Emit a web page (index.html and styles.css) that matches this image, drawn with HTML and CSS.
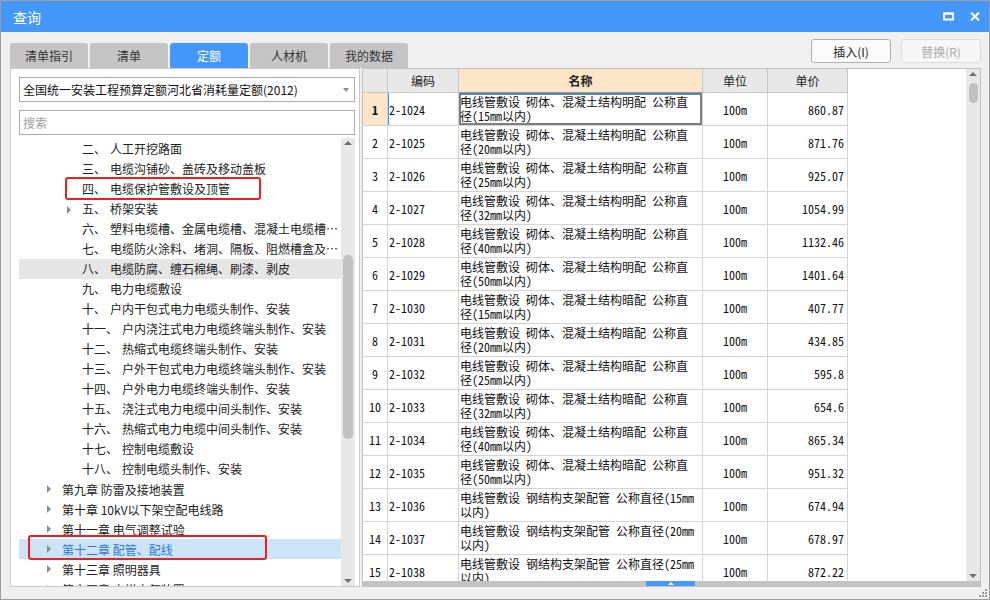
FILE: index.html
```html
<!DOCTYPE html>
<html lang="zh-CN">
<head>
<meta charset="utf-8">
<title>查询</title>
<link rel="stylesheet" href="styles.css">
</head>
<body>
<div class="window">
  <div class="titlebar">
    <span class="title">查询</span>
    <div class="win-btns">
      <svg class="ico-max" width="11" height="9" viewBox="0 0 11 9"><rect x="1" y="1.5" width="9" height="6" fill="none" stroke="#fff" stroke-width="2"/><rect x="1" y="0.5" width="9" height="2" fill="#fff"/></svg>
      <svg class="ico-close" width="10" height="9" viewBox="0 0 10 9"><path d="M1 0.5 L9 8.5 M9 0.5 L1 8.5" stroke="#fff" stroke-width="2" fill="none"/></svg>
    </div>
  </div>

  <div class="toolbar">
    <div class="tabs">
      <div class="tab">清单指引</div>
      <div class="tab">清单</div>
      <div class="tab active">定额</div>
      <div class="tab">人材机</div>
      <div class="tab">我的数据</div>
    </div>
    <div class="actions">
      <div class="btn">插入(I)</div>
      <div class="btn disabled">替换(R)</div>
    </div>
  </div>

  <div class="panels">
    <div class="left">
      <div class="select"><span class="select-text">全国统一安装工程预算定额河北省消耗量定额(2012)</span><i class="caret-down"></i></div>
      <div class="search">搜索</div>
      <div class="tree-wrap">
        <div class="tree">
          <div class="row l2"><i class="arr none"></i><span class="lbl">二、</span>人工开挖路面</div>
          <div class="row l2"><i class="arr none"></i><span class="lbl">三、</span>电缆沟铺砂、盖砖及移动盖板</div>
          <div class="row l2"><i class="arr none"></i><span class="lbl">四、</span>电缆保护管敷设及顶管</div>
          <div class="row l2"><i class="arr"></i><span class="lbl">五、</span>桥架安装</div>
          <div class="row l2"><i class="arr none"></i><span class="lbl">六、</span>塑料电缆槽、金属电缆槽、混凝土电缆槽、电缆桥架</div>
          <div class="row l2"><i class="arr none"></i><span class="lbl">七、</span>电缆防火涂料、堵洞、隔板、阻燃槽盒及防火包</div>
          <div class="row l2 hover"><i class="arr none"></i><span class="lbl">八、</span>电缆防腐、缠石棉绳、刷漆、剥皮</div>
          <div class="row l2"><i class="arr none"></i><span class="lbl">九、</span>电力电缆敷设</div>
          <div class="row l2"><i class="arr none"></i><span class="lbl">十、</span>户内干包式电力电缆头制作、安装</div>
          <div class="row l2"><i class="arr none"></i><span class="lbl">十一、</span>户内浇注式电力电缆终端头制作、安装</div>
          <div class="row l2"><i class="arr none"></i><span class="lbl">十二、</span>热缩式电缆终端头制作、安装</div>
          <div class="row l2"><i class="arr none"></i><span class="lbl">十三、</span>户外干包式电力电缆终端头制作、安装</div>
          <div class="row l2"><i class="arr none"></i><span class="lbl">十四、</span>户外电力电缆终端头制作、安装</div>
          <div class="row l2"><i class="arr none"></i><span class="lbl">十五、</span>浇注式电力电缆中间头制作、安装</div>
          <div class="row l2"><i class="arr none"></i><span class="lbl">十六、</span>热缩式电力电缆中间头制作、安装</div>
          <div class="row l2"><i class="arr none"></i><span class="lbl">十七、</span>控制电缆敷设</div>
          <div class="row l2"><i class="arr none"></i><span class="lbl">十八、</span>控制电缆头制作、安装</div>
          <div class="row l1"><i class="arr"></i>第九章 防雷及接地装置</div>
          <div class="row l1"><i class="arr"></i>第十章 10kV以下架空配电线路</div>
          <div class="row l1"><i class="arr"></i>第十一章 电气调整试验</div>
          <div class="row l1 selected"><i class="arr"></i>第十二章 配管、配线</div>
          <div class="row l1"><i class="arr"></i>第十三章 照明器具</div>
          <div class="row l1"><i class="arr"></i>第十四章 电梯电气装置</div>
          <div class="mark mark1"></div>
          <div class="mark mark2"></div>
        </div>
        <div class="vscroll tree-scroll">
          <i class="sc-up"></i>
          <div class="thumb tree-thumb"></div>
          <i class="sc-down"></i>
        </div>
      </div>
    </div>

    <div class="right">
      <div class="grid-area">
        <div class="grid">
          <div class="grow head">
            <div class="c c-no"></div>
            <div class="c c-code">编码</div>
            <div class="c c-name hname">名称</div>
            <div class="c c-unit">单位</div>
            <div class="c c-price hprice">单价</div>
          </div>
          <div class="grow cur">
            <div class="c c-no">1</div>
            <div class="c c-code">2-1024</div>
            <div class="c c-name">电线管敷设 砌体、混凝土结构明配 公称直<br>径(15mm以内)</div>
            <div class="c c-unit">100m</div>
            <div class="c c-price">860.87</div>
          </div>
          <div class="grow">
            <div class="c c-no">2</div>
            <div class="c c-code">2-1025</div>
            <div class="c c-name">电线管敷设 砌体、混凝土结构明配 公称直<br>径(20mm以内)</div>
            <div class="c c-unit">100m</div>
            <div class="c c-price">871.76</div>
          </div>
          <div class="grow">
            <div class="c c-no">3</div>
            <div class="c c-code">2-1026</div>
            <div class="c c-name">电线管敷设 砌体、混凝土结构明配 公称直<br>径(25mm以内)</div>
            <div class="c c-unit">100m</div>
            <div class="c c-price">925.07</div>
          </div>
          <div class="grow">
            <div class="c c-no">4</div>
            <div class="c c-code">2-1027</div>
            <div class="c c-name">电线管敷设 砌体、混凝土结构明配 公称直<br>径(32mm以内)</div>
            <div class="c c-unit">100m</div>
            <div class="c c-price">1054.99</div>
          </div>
          <div class="grow">
            <div class="c c-no">5</div>
            <div class="c c-code">2-1028</div>
            <div class="c c-name">电线管敷设 砌体、混凝土结构明配 公称直<br>径(40mm以内)</div>
            <div class="c c-unit">100m</div>
            <div class="c c-price">1132.46</div>
          </div>
          <div class="grow">
            <div class="c c-no">6</div>
            <div class="c c-code">2-1029</div>
            <div class="c c-name">电线管敷设 砌体、混凝土结构明配 公称直<br>径(50mm以内)</div>
            <div class="c c-unit">100m</div>
            <div class="c c-price">1401.64</div>
          </div>
          <div class="grow">
            <div class="c c-no">7</div>
            <div class="c c-code">2-1030</div>
            <div class="c c-name">电线管敷设 砌体、混凝土结构暗配 公称直<br>径(15mm以内)</div>
            <div class="c c-unit">100m</div>
            <div class="c c-price">407.77</div>
          </div>
          <div class="grow">
            <div class="c c-no">8</div>
            <div class="c c-code">2-1031</div>
            <div class="c c-name">电线管敷设 砌体、混凝土结构暗配 公称直<br>径(20mm以内)</div>
            <div class="c c-unit">100m</div>
            <div class="c c-price">434.85</div>
          </div>
          <div class="grow">
            <div class="c c-no">9</div>
            <div class="c c-code">2-1032</div>
            <div class="c c-name">电线管敷设 砌体、混凝土结构暗配 公称直<br>径(25mm以内)</div>
            <div class="c c-unit">100m</div>
            <div class="c c-price">595.8</div>
          </div>
          <div class="grow">
            <div class="c c-no">10</div>
            <div class="c c-code">2-1033</div>
            <div class="c c-name">电线管敷设 砌体、混凝土结构暗配 公称直<br>径(32mm以内)</div>
            <div class="c c-unit">100m</div>
            <div class="c c-price">654.6</div>
          </div>
          <div class="grow">
            <div class="c c-no">11</div>
            <div class="c c-code">2-1034</div>
            <div class="c c-name">电线管敷设 砌体、混凝土结构暗配 公称直<br>径(40mm以内)</div>
            <div class="c c-unit">100m</div>
            <div class="c c-price">865.34</div>
          </div>
          <div class="grow">
            <div class="c c-no">12</div>
            <div class="c c-code">2-1035</div>
            <div class="c c-name">电线管敷设 砌体、混凝土结构暗配 公称直<br>径(50mm以内)</div>
            <div class="c c-unit">100m</div>
            <div class="c c-price">951.32</div>
          </div>
          <div class="grow">
            <div class="c c-no">13</div>
            <div class="c c-code">2-1036</div>
            <div class="c c-name">电线管敷设 钢结构支架配管 公称直径(15mm<br>以内)</div>
            <div class="c c-unit">100m</div>
            <div class="c c-price">674.94</div>
          </div>
          <div class="grow">
            <div class="c c-no">14</div>
            <div class="c c-code">2-1037</div>
            <div class="c c-name">电线管敷设 钢结构支架配管 公称直径(20mm<br>以内)</div>
            <div class="c c-unit">100m</div>
            <div class="c c-price">678.97</div>
          </div>
          <div class="grow">
            <div class="c c-no">15</div>
            <div class="c c-code">2-1038</div>
            <div class="c c-name">电线管敷设 钢结构支架配管 公称直径(25mm<br>以内)</div>
            <div class="c c-unit">100m</div>
            <div class="c c-price">872.22</div>
          </div>
        </div>
        <div class="vscroll grid-scroll">
          <i class="sc-up"></i>
          <div class="thumb grid-thumb"></div>
          <i class="sc-down"></i>
        </div>
      </div>
      <div class="hscroll"><div class="hthumb"><i class="hthumb-arrow"></i></div></div>
    </div>
  </div>

  <div class="statusbar">
    <svg class="grip" width="10" height="8" viewBox="0 0 10 8"><rect x="8" y="0" width="2" height="2" fill="#9a9a9a"/><rect x="5" y="3" width="2" height="2" fill="#9a9a9a"/><rect x="8" y="3" width="2" height="2" fill="#9a9a9a"/><rect x="2" y="6" width="2" height="2" fill="#9a9a9a"/><rect x="5" y="6" width="2" height="2" fill="#9a9a9a"/><rect x="8" y="6" width="2" height="2" fill="#9a9a9a"/></svg>
  </div>
</div>
</body>
</html>
```

FILE: styles.css
```css
html, body {
  margin: 0;
  padding: 0;
  background: #f0f0f0;
}

.window {
  width: 990px;
  height: 600px;
  box-sizing: border-box;
  border: 1px solid #9d9d9d;
  background: #f0f0f0;
  display: flex;
  flex-direction: column;
  font-family: "Noto Sans CJK SC", "Liberation Sans", sans-serif;
  font-size: 12px;
  color: #222;
  overflow: hidden;
}

/* title bar */
.titlebar {
  height: 31px;
  flex: none;
  background: #4598fb;
  display: flex;
  align-items: center;
  padding: 0 9px 0 12px;
}
.title {
  color: #fff;
  font-size: 14px;
  line-height: 16px;
  margin-top: 1px;
}
.win-btns {
  margin-left: auto;
  display: flex;
  align-items: center;
  gap: 16px;
}

/* toolbar */
.toolbar {
  height: 36px;
  flex: none;
  display: flex;
  align-items: flex-end;
  padding: 0 8px 0 9px;
}
.tabs {
  display: flex;
  gap: 2px;
}
.tab {
  width: 78px;
  height: 25px;
  box-sizing: border-box;
  background: #c5c5c5;
  border-radius: 3px 3px 0 0;
  display: flex;
  align-items: center;
  justify-content: center;
  color: #333;
  font-size: 12px;
}
.tab.active {
  background: #4598fb;
  color: #fff;
}
.actions {
  margin-left: auto;
  align-self: flex-start;
  margin-top: 7px;
  display: flex;
  gap: 10px;
}
.btn {
  width: 80px;
  height: 24px;
  box-sizing: border-box;
  border: 1px solid #b0b0b0;
  border-radius: 3px;
  background: #fbfbfb;
  display: flex;
  align-items: center;
  justify-content: center;
  color: #222;
}
.btn.disabled {
  border-color: #dadada;
  color: #ababab;
  background: #f7f7f7;
}

/* panels */
.panels {
  height: 519px;
  flex: none;
  display: flex;
  gap: 2px;
  padding: 0 8px 0 9px;
}
.left {
  width: 350px;
  flex: none;
  box-sizing: border-box;
  border: 1px solid #c9c9c9;
  background: #fff;
  padding: 8px 4px 0 8px;
  display: flex;
  flex-direction: column;
}
.select, .search {
  height: 25px;
  box-sizing: border-box;
  border: 1px solid #ababab;
  display: flex;
  align-items: center;
  padding-left: 3px;
  flex: none;
}
.select-text { color: #111; }
.caret-down {
  margin-left: auto;
  margin-right: 5px;
  width: 0;
  height: 0;
  border-left: 3px solid transparent;
  border-right: 3px solid transparent;
  border-top: 4px solid #8a8a8a;
}
.search {
  margin-top: 8px;
  color: #a0a0a0;
}
.tree-wrap {
  margin-top: 3px;
  flex: 1;
  display: flex;
  min-height: 0;
}
.tree {
  position: relative;
  flex: 1;
  overflow: hidden;
  padding-top: 1px;
}
.row {
  height: 20px;
  display: flex;
  align-items: center;
  white-space: nowrap;
  color: #222;
  overflow: hidden;
  text-overflow: ellipsis;
}
.row.l1 { padding-left: 28px; }
.row.l2 { padding-left: 48px; display: block; line-height: 20px; }
.row.hover { background: #e6e6e6; }
.row.selected { background: #cce4f7; color: #2f7ad6; }
.arr {
  flex: none;
  width: 0;
  height: 0;
  border-top: 4px solid transparent;
  border-bottom: 4px solid transparent;
  border-left: 4px solid #8c8c8c;
  margin-right: 11px;
}
.arr.none { border-left-color: transparent; }
.row.l2 .arr { display: inline-block; vertical-align: middle; margin-top: -2px; }
.lbl { margin-right: 4px; }

.mark {
  position: absolute;
  border: 2px solid #f21c1c;
  border-radius: 3px;
  box-sizing: border-box;
  pointer-events: none;
}
.mark1 { left: 46px; top: 39px; width: 196px; height: 23px; }
.mark2 { left: 9px; top: 397px; width: 239px; height: 25px; }

/* scrollbars */
.vscroll {
  width: 14px;
  flex: none;
  background: #e8e8e8;
  display: flex;
  flex-direction: column;
  align-items: center;
}
.sc-up, .sc-down {
  width: 0;
  height: 0;
  border-left: 4px solid transparent;
  border-right: 4px solid transparent;
  flex: none;
}
.sc-up { border-bottom: 4px solid #707070; margin-top: 3px; }
.sc-down { border-top: 4px solid #707070; margin-top: auto; margin-bottom: 3px; }
.thumb {
  width: 10px;
  background: #c1c1c1;
  border-radius: 5px;
  flex: none;
}
.tree-thumb { margin-top: 110px; height: 184px; }
.grid-thumb { margin-top: 7px; height: 20px; width: 9px; }

/* right grid */
.right {
  flex: 1;
  box-sizing: border-box;
  border: 1px solid #c2c2c2;
  background: #fff;
  display: flex;
  flex-direction: column;
}
.grid-area {
  flex: 1;
  display: flex;
  min-height: 0;
  overflow: hidden;
}
.grid {
  flex: 1;
  overflow: hidden;
  font-family: "Noto Sans Mono CJK SC", "Noto Sans CJK SC", "Liberation Mono", monospace;
  font-size: 12px;
  color: #111;
}
.grow {
  display: flex;
  height: 33px;
  box-sizing: border-box;
  width: 485px;
}
.grow.head { height: 24px; }
.c {
  box-sizing: border-box;
  border-right: 1px solid #d4d4d4;
  border-bottom: 1px solid #d4d4d4;
  display: flex;
  align-items: center;
  overflow: hidden;
  white-space: nowrap;
}
.c-no { width: 25px; justify-content: center; }
.c-code { width: 71px; padding-left: 1px; }
.c-name {
  width: 244px;
  display: block;
  padding: 2px 0 0 1px;
  line-height: 14px;
}
.c-unit { width: 65px; justify-content: center; }
.c-price { width: 80px; justify-content: flex-end; padding-right: 3px; }

.head .c {
  background: #e8e8e8;
  border-color: #c6c6c6;
  display: flex;
  align-items: center;
  justify-content: center;
  padding: 0;
  line-height: normal;
  font-family: "Noto Sans CJK SC", sans-serif;
  color: #222;
}
.head .c.hname {
  background: #fde5c8;
  font-weight: bold;
  border-bottom-color: #5aa4ee;
}

.grow.cur .c-no {
  background: #fde5c8;
  font-weight: bold;
}
.grow.cur .c-code { box-shadow: inset 1px 0 0 #3d8fe6; }
.grow.cur .c-name { box-shadow: inset 0 0 0 2px #7e7e7e; }

.hscroll {
  height: 5px;
  flex: none;
  background: #c3c3c3;
  display: flex;
  padding-left: 283px;
}
.hthumb {
  width: 49px;
  height: 5px;
  background: #4598fb;
  display: flex;
  justify-content: center;
}
.hthumb-arrow {
  width: 0;
  height: 0;
  margin-top: 1px;
  border-left: 3px solid transparent;
  border-right: 3px solid transparent;
  border-bottom: 3px solid #fff;
}

.statusbar {
  flex: 1;
  display: flex;
  justify-content: flex-end;
  align-items: flex-end;
  padding: 0 2px 2px 0;
}
```
